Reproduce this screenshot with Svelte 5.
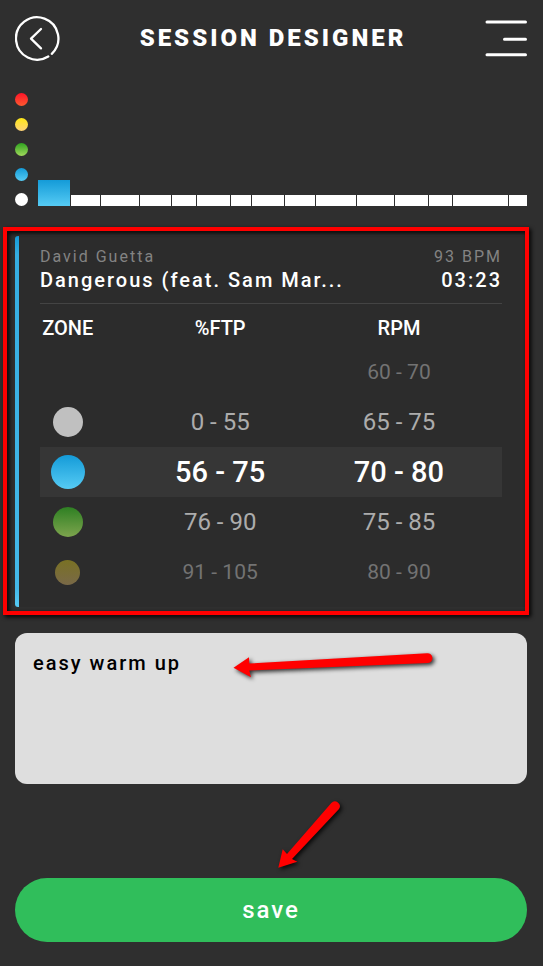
<script lang="ts">
  type Zone = 'white' | 'blue' | 'green' | 'yellow' | 'red';

  const legend: Zone[] = ['red', 'yellow', 'green', 'blue', 'white'];

  // relative track lengths of the playlist
  const tracks: { length: number; zone: Zone }[] = [
    { length: 32, zone: 'blue' },
    { length: 29, zone: 'white' },
    { length: 38, zone: 'white' },
    { length: 31, zone: 'white' },
    { length: 24, zone: 'white' },
    { length: 33, zone: 'white' },
    { length: 20, zone: 'white' },
    { length: 32, zone: 'white' },
    { length: 30, zone: 'white' },
    { length: 40, zone: 'white' },
    { length: 37, zone: 'white' },
    { length: 33, zone: 'white' },
    { length: 23, zone: 'white' },
    { length: 55, zone: 'white' },
    { length: 18, zone: 'white' }
  ];

  const rows: { zone: Zone | null; ftp: string; rpm: string; level: string }[] = [
    { zone: null, ftp: '', rpm: '60 - 70', level: 'far' },
    { zone: 'white', ftp: '0 - 55', rpm: '65 - 75', level: 'near' },
    { zone: 'blue', ftp: '56 - 75', rpm: '70 - 80', level: 'selected' },
    { zone: 'green', ftp: '76 - 90', rpm: '75 - 85', level: 'near' },
    { zone: 'yellow', ftp: '91 - 105', rpm: '80 - 90', level: 'far' }
  ];

  let notes = $state('easy warm up');
</script>

<div class="page">
  <header class="header">
    <button class="icon-button" type="button" aria-label="Back">
      <svg width="46" height="46" viewBox="0 0 46 46" fill="none" stroke="#fff" stroke-width="2.3" stroke-linecap="round">
        <path d="M33.3 41.5 A21.2 21.2 0 1 1 36.8 38.8" />
        <path d="M26 14 L16 23.6 L26 33.4" stroke-linejoin="round" />
      </svg>
    </button>
    <h1>SESSION DESIGNER</h1>
    <button class="icon-button" type="button" aria-label="Menu">
      <svg width="42" height="46" viewBox="0 0 42 46" fill="none" stroke="#fff" stroke-width="3" stroke-linecap="round">
        <path d="M2 7 H40.5 M19.5 24.3 H40.5 M2 39.8 H40.5" />
      </svg>
    </button>
  </header>

  <section class="timeline">
    <div class="legend">
      {#each legend as zone}
        <span class="dot {zone}"></span>
      {/each}
    </div>
    <div class="bars">
      {#each tracks as track}
        <span class="bar {track.zone}" style="flex-grow: {track.length}"></span>
      {/each}
    </div>
  </section>

  <section class="track">
    <div class="track-info">
      <div class="track-line artist">
        <span>David Guetta</span>
        <span>93 BPM</span>
      </div>
      <div class="track-line title">
        <span>Dangerous (feat. Sam Mar...</span>
        <span>03:23</span>
      </div>
    </div>
    <table>
      <thead>
        <tr>
          <th class="zone-cell">ZONE</th>
          <th class="ftp-cell">%FTP</th>
          <th class="rpm-cell">RPM</th>
        </tr>
      </thead>
      <tbody>
        {#each rows as row}
          <tr class={row.level}>
            <td class="zone-cell">
              {#if row.zone}
                <span class="ball {row.zone}"></span>
              {/if}
            </td>
            <td class="ftp-cell">{row.ftp}</td>
            <td class="rpm-cell">{row.rpm}</td>
          </tr>
        {/each}
      </tbody>
    </table>
    <div class="callout"></div>
  </section>

  <section class="notes">
    <textarea aria-label="Notes" spellcheck="false" bind:value={notes}></textarea>
    <svg class="arrow notes-arrow" width="210" height="40" viewBox="0 0 210 40" fill="#f00">
      <path d="M3.5 19.7 L19 9.3 L19.3 15.6 L197 5.2 A4.9 4.9 0 0 1 198 15 L19.3 22.6 L21 29.2 Z" />
    </svg>
  </section>

  <div class="actions">
    <button class="save" type="button">save</button>
    <svg class="arrow save-arrow" width="80" height="82" viewBox="0 0 80 82" fill="#f00">
      <path d="M7.3 72.7 L11.7 54.3 L16 59 L60.3 8 A4.9 4.9 0 0 1 68 14 L21 64 L26.3 66.7 Z" />
    </svg>
  </div>
</div>

<style>
  :global(body) {
    margin: 0;
    background: #2f2f2f;
  }

  .page {
    box-sizing: border-box;
    min-height: 100vh;
    padding: 15px 16px 24px 15px;
    background: #2f2f2f;
    color: #fff;
    font-family: Roboto, "Liberation Sans", sans-serif;
  }

  .header {
    display: flex;
    align-items: center;
    justify-content: space-between;
  }

  h1 {
    margin: 0;
    font-size: 24px;
    line-height: 32px;
    font-weight: 900;
    letter-spacing: 3px;
  }

  .icon-button {
    display: flex;
    padding: 0;
    border: none;
    background: none;
    cursor: pointer;
  }

  /* Zones */
  .white {
    background: #fff;
  }

  .blue {
    background: linear-gradient(#149bd8, #56cbf4);
  }

  .green {
    background: linear-gradient(#2fa31f, #a0d85c);
  }

  .yellow {
    background: linear-gradient(#fde716, #fdd177);
  }

  .red {
    background: linear-gradient(#ff1428, #fc5a30);
  }

  /* Timeline */
  .timeline {
    display: flex;
    align-items: flex-end;
    gap: 10px;
    margin-top: 32px;
  }

  .legend {
    display: flex;
    flex-direction: column;
    gap: 12px;
  }

  .dot {
    width: 13px;
    height: 13px;
    border-radius: 50%;
  }

  .bars {
    flex: 1;
    display: flex;
    align-items: flex-end;
    gap: 1px;
  }

  .bar {
    flex-basis: 0;
    height: 11px;
  }

  .bar.blue {
    height: 26px;
  }

  /* Track */
  .track {
    position: relative;
    margin-top: 30px;
    padding: 11px 25px 10px;
    background: linear-gradient(#149bd8, #35aee2 5%, #44b9e9 95%, #56cbf4) left / 4px 100% no-repeat #2c2c2c;
    border-radius: 3px;
  }

  .track-info {
    padding-bottom: 9px;
    border-bottom: 1px solid #444;
  }

  .track-line {
    display: flex;
    justify-content: space-between;
  }

  .artist {
    font-size: 16px;
    line-height: 20px;
    letter-spacing: 2px;
    color: #838383;
  }

  .title {
    font-size: 20px;
    line-height: 27px;
    font-weight: 500;
    letter-spacing: 2px;
  }

  table {
    width: 100%;
    table-layout: fixed;
    border-collapse: collapse;
    text-align: center;
  }

  th {
    height: 43px;
    padding: 4px 0 0;
    box-sizing: border-box;
    font-size: 20px;
    font-weight: 500;
  }

  td {
    height: 50px;
    padding: 0;
  }

  .zone-cell {
    width: 20%;
    padding-right: 37px;
    box-sizing: border-box;
  }

  .ftp-cell {
    width: 38%;
  }

  .rpm-cell {
    width: 42%;
    padding-right: 12px;
    box-sizing: border-box;
  }

  .ball {
    display: block;
    width: 30px;
    height: 30px;
    margin: 0 auto;
    border-radius: 50%;
  }

  .near {
    font-size: 24px;
    color: #acacac;
  }

  .near .ball {
    opacity: 0.7;
  }

  .far {
    font-size: 21px;
    color: #737373;
  }

  .far .ball {
    width: 25px;
    height: 25px;
    opacity: 0.37;
  }

  .selected {
    background: #363636;
    font-size: 29px;
    font-weight: 500;
  }

  .selected .ball {
    width: 34px;
    height: 34px;
  }

  .callout {
    position: absolute;
    inset: -9px -2px -8px -12px;
    border: 4px solid #f00;
    filter: drop-shadow(2px 2px 2px #000);
    pointer-events: none;
  }

  /* Notes */
  .notes {
    position: relative;
    margin-top: 26px;
  }

  textarea {
    display: block;
    box-sizing: border-box;
    width: 100%;
    height: 151px;
    padding: 18px;
    border: none;
    border-radius: 12px;
    background: #dedede;
    color: #000;
    font-family: inherit;
    font-size: 20px;
    line-height: 24px;
    font-weight: 500;
    letter-spacing: 2px;
    resize: none;
    outline: none;
  }

  .arrow {
    position: absolute;
    overflow: visible;
    filter: drop-shadow(2px 2px 2px rgba(0, 0, 0, 0.8));
    pointer-events: none;
  }

  .notes-arrow {
    top: 15px;
    left: 42%;
  }

  /* Actions */
  .actions {
    position: relative;
    margin-top: 94px;
  }

  .save {
    display: block;
    width: 100%;
    height: 64px;
    border: none;
    border-radius: 32px;
    background: #30be5b;
    color: #fff;
    font-family: inherit;
    font-size: 24px;
    font-weight: 500;
    letter-spacing: 2px;
    cursor: pointer;
  }

  .save-arrow {
    bottom: 65px;
    left: 50%;
  }
</style>
